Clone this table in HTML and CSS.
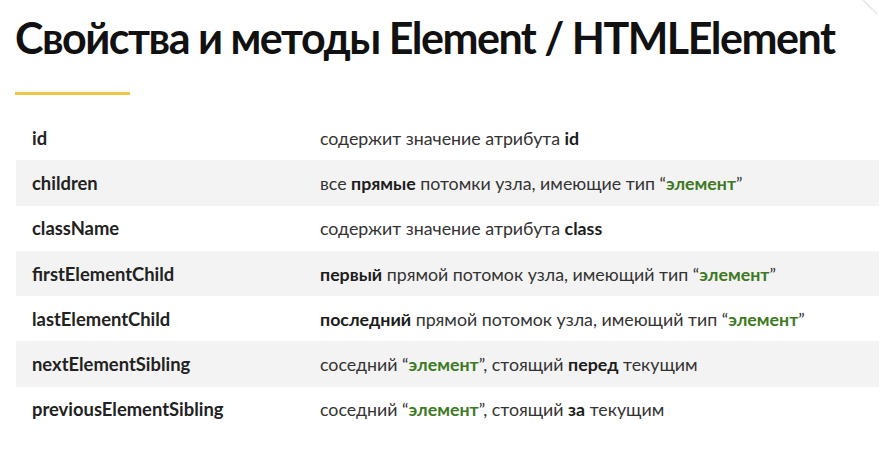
FILE: index.html
```html
<!DOCTYPE html>
<html lang="ru">
<head>
<meta charset="utf-8">
<link rel="stylesheet" href="styles.css">
</head>
<body>
<div class="page">
  <svg class="corner" width="20" height="16" viewBox="0 0 20 16"><line x1="4" y1="0" x2="18" y2="14" stroke="#e6e6e6" stroke-width="1.5"/></svg>
  <h1 class="title">Свойства и методы Element / HTMLElement</h1>
  <div class="rule"></div>
  <div class="table">
    <div class="row"><div class="name">id</div><div class="desc">содержит значение атрибута <b>id</b></div></div>
    <div class="row alt"><div class="name">children</div><div class="desc">все <b>прямые</b> потомки узла, имеющие тип “<b class="g">элемент</b>”</div></div>
    <div class="row"><div class="name">className</div><div class="desc">содержит значение атрибута <b>class</b></div></div>
    <div class="row alt"><div class="name">firstElementChild</div><div class="desc"><b>первый</b> прямой потомок узла, имеющий тип “<b class="g">элемент</b>”</div></div>
    <div class="row"><div class="name">lastElementChild</div><div class="desc"><b>последний</b> прямой потомок узла, имеющий тип “<b class="g">элемент</b>”</div></div>
    <div class="row alt"><div class="name">nextElementSibling</div><div class="desc">соседний “<b class="g">элемент</b>”, стоящий <b>перед</b> текущим</div></div>
    <div class="row"><div class="name">previousElementSibling</div><div class="desc">соседний “<b class="g">элемент</b>”, стоящий <b>за</b> текущим</div></div>
  </div>
</div>
</body>
</html>
```
FILE: styles.css
```css
html, body { margin: 0; padding: 0; background: #fff; }
.page {
  position: relative;
  width: 879px;
  height: 450px;
  overflow: hidden;
  font-family: Lato, "Noto Sans", sans-serif;
  color: #222;
}
.corner { position: absolute; right: 0; top: 0; }
.title {
  margin: 0;
  padding: 12px 0 0 15px;
  font-size: 43px;
  line-height: 52px;
  font-weight: 700;
  letter-spacing: -1.5px;
  color: #111;
  white-space: nowrap;
}
.rule {
  margin: 28px 0 0 15px;
  width: 115px;
  height: 3px;
  background: #efc747;
}
.table {
  margin: 20px 0 0 16px;
  display: flex;
  flex-direction: column;
}
.row {
  display: grid;
  grid-template-columns: 304px 1fr;
  height: 45.3px;
  align-items: center;
  font-size: 17.8px;
}
.row.alt { background: #f3f3f3; }
.name { padding-left: 16px; font-weight: 700; font-size: 18.4px; color: #222; }
.desc { color: #333; }
.desc b { font-weight: 700; color: #1c1c1c; }
.desc b.g { color: #3d7a23; }
```
